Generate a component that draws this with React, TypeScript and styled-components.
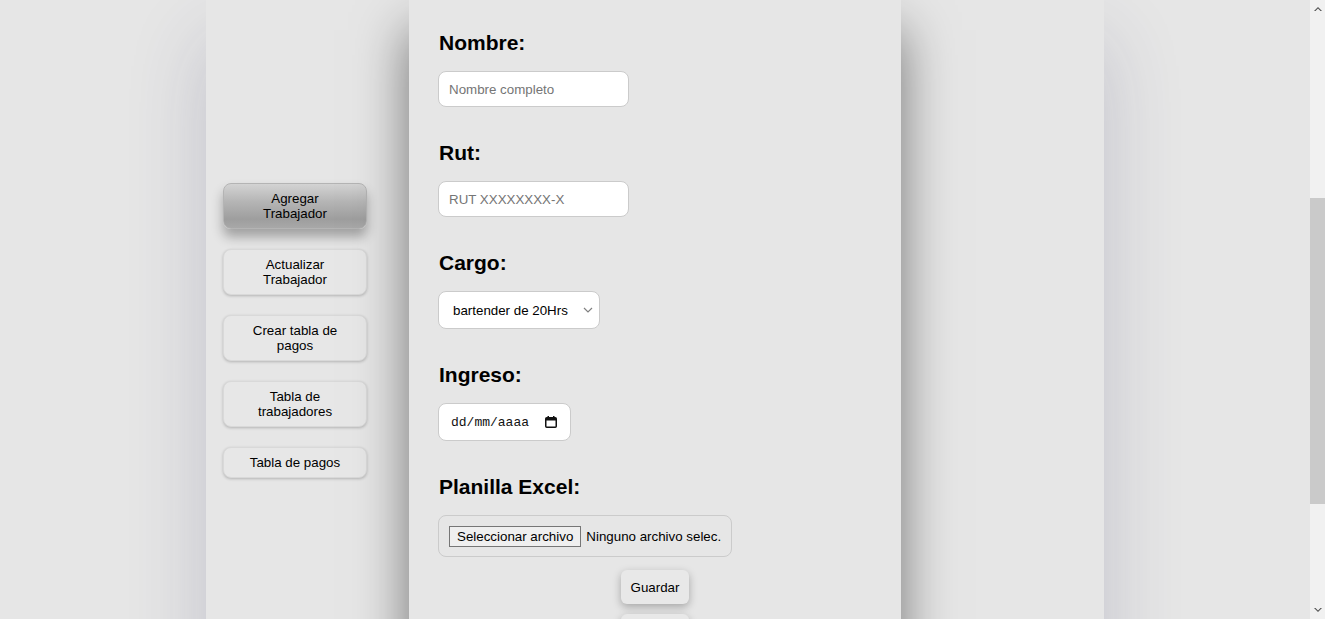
import React from 'react';
import styled, { createGlobalStyle } from 'styled-components';

const GlobalStyle = createGlobalStyle`
  html, body {
    margin: 0;
    padding: 0;
    height: 100%;
    overflow: hidden;
    background: #e6e6e6;
  }
  body {
    font-family: "Liberation Sans", Arial, sans-serif;
    color: #000;
  }
  #root { height: 100%; }
  * { box-sizing: border-box; }
`;

const Viewport = styled.div`
  display: flex;
  width: 100vw;
  height: 100vh;
  overflow: hidden;
`;

const Page = styled.div`
  flex: 1;
  min-width: 0;
  height: 100%;
  overflow: hidden;
  display: flex;
  justify-content: center;
  background: #e6e6e6;
`;

const Layout = styled.div`
  display: grid;
  grid-template-columns: 203px 492px 203px;
  width: 898px;
  height: 100%;
`;

const SideColumn = styled.aside`
  position: relative;
  z-index: 1;
  background: #e6e6e6;
  box-shadow: 0 40px 80px rgba(50, 50, 93, 0.2);
`;

const Sidebar = styled(SideColumn)`
  display: flex;
  flex-direction: column;
  align-items: flex-start;
  gap: 20px;
  padding: 183px 0 0 17px;
`;

const NavButton = styled.button<{ $active?: boolean }>`
  width: 144px;
  padding: 7px 20px;
  font-family: "Liberation Sans", Arial, sans-serif;
  font-size: 13.333px;
  line-height: 15px;
  color: #000;
  text-align: center;
  border-radius: 8px;
  border: 1px solid ${(p) => (p.$active ? '#b4b4b4' : '#d9d9d9')};
  background: ${(p) =>
    p.$active
      ? 'linear-gradient(180deg, #d3d3d3 0%, #b5b5b5 40%, #9e9e9e 80%, #a8a8a8 100%)'
      : '#e7e7e7'};
  box-shadow: ${(p) =>
    p.$active ? '0 8px 12px rgba(0, 0, 0, 0.3)' : '0 1px 3px rgba(0, 0, 0, 0.22)'};
  cursor: pointer;
`;

const FormPanel = styled.main`
  position: relative;
  z-index: 2;
  background: #e6e6e6;
  box-shadow: 0 30px 50px rgba(0, 0, 0, 0.5);
  padding: 30px 29px;
  display: flex;
  flex-direction: column;
  align-items: flex-start;
`;

const Field = styled.div<{ $last?: boolean }>`
  display: flex;
  flex-direction: column;
  align-items: flex-start;
  margin-bottom: ${(p) => (p.$last ? '13px' : '33px')};
`;

const Label = styled.label`
  font-size: 21px;
  font-weight: bold;
  line-height: 24px;
  margin: 1px 0 16px 1px;
`;

const TextInput = styled.input`
  width: 191px;
  height: 36px;
  padding: 0 10px;
  border: 1px solid #cbcbcb;
  border-radius: 8px;
  background: #fff;
  font-family: "Liberation Sans", Arial, sans-serif;
  font-size: 13.333px;
  color: #000;
  outline: none;
  &::placeholder { color: #757575; }
`;

const chevron =
  "url(\"data:image/svg+xml;utf8,<svg xmlns='http://www.w3.org/2000/svg' width='10' height='6' viewBox='0 0 10 6'><path d='M1 1l4 4 4-4' fill='none' stroke='%23808080' stroke-width='1.2'/></svg>\")";

const Select = styled.select`
  appearance: none;
  -webkit-appearance: none;
  width: 162px;
  height: 38px;
  padding: 0 24px 0 14px;
  border: 1px solid #cbcbcb;
  border-radius: 8px;
  background: #fff ${chevron} no-repeat right 6px center;
  font-family: "Liberation Sans", Arial, sans-serif;
  font-size: 13.333px;
  color: #000;
  outline: none;
`;

const DateBox = styled.div`
  width: 133px;
  height: 38px;
  padding: 0 13px 0 12px;
  border: 1px solid #cbcbcb;
  border-radius: 8px;
  background: #fff;
  display: flex;
  align-items: center;
  justify-content: space-between;
`;

const DateText = styled.span`
  font-family: "Liberation Mono", "DejaVu Sans Mono", monospace;
  font-size: 13px;
  color: #111;
`;

const FileBox = styled.div`
  width: 294px;
  height: 42px;
  padding: 0 10px;
  border: 1px solid #cbcbcb;
  border-radius: 8px;
  display: flex;
  align-items: center;
  gap: 5px;
  white-space: nowrap;
`;

const FileButton = styled.button`
  flex: none;
  padding: 2px 7px;
  border: 1px solid #767676;
  border-radius: 0;
  background: #efefef;
  font-family: "Liberation Sans", Arial, sans-serif;
  font-size: 13.333px;
  color: #000;
  line-height: normal;
  white-space: nowrap;
`;

const FileName = styled.span`
  font-size: 13.333px;
  color: #000;
  white-space: nowrap;
`;

const ActionButton = styled.button<{ $gap?: number }>`
  align-self: center;
  min-width: 68px;
  height: 34px;
  padding: 0 10px;
  margin-top: ${(p) => p.$gap ?? 0}px;
  border: none;
  border-radius: 6px;
  background: #e8e8e8;
  box-shadow: 0 3px 8px rgba(0, 0, 0, 0.28);
  font-family: "Liberation Sans", Arial, sans-serif;
  font-size: 13.333px;
  color: #000;
  flex: none;
`;

const Scrollbar = styled.div`
  width: 15px;
  flex: none;
  height: 100%;
  background: #f1f1f1;
  display: flex;
  flex-direction: column;
`;

const ScrollArrow = styled.div`
  height: 17px;
  flex: none;
  display: flex;
  align-items: center;
  justify-content: center;
`;

const ScrollGap = styled.div<{ $h?: number }>`
  flex: ${(p) => (p.$h ? 'none' : '1')};
  height: ${(p) => (p.$h ? `${p.$h}px` : 'auto')};
`;

const Thumb = styled.div`
  height: 306px;
  flex: none;
  background: #cacaca;
`;

const CalendarIcon = () => (
  <svg width="12" height="12" viewBox="0 0 12 12" aria-hidden="true">
    <rect x="2.5" y="0" width="1.5" height="2" fill="#111" />
    <rect x="8" y="0" width="1.5" height="2" fill="#111" />
    <rect x="0.75" y="1.75" width="10.5" height="9.5" rx="1" fill="none" stroke="#111" strokeWidth="1.5" />
    <rect x="1" y="2" width="10" height="2.5" fill="#111" />
  </svg>
);

const ArrowUp = () => (
  <svg width="8" height="5" viewBox="0 0 8 5" aria-hidden="true">
    <polygon points="0,5 4,1 8,5 6.5,5 4,2.6 1.5,5" fill="#505050" />
  </svg>
);

const ArrowDown = () => (
  <svg width="8" height="5" viewBox="0 0 8 5" aria-hidden="true">
    <polygon points="0,0 4,4 8,0 6.5,0 4,2.4 1.5,0" fill="#505050" />
  </svg>
);

const navItems = [
  'Agregar Trabajador',
  'Actualizar Trabajador',
  'Crear tabla de pagos',
  'Tabla de trabajadores',
  'Tabla de pagos',
];

export default function App() {
  return (
    <>
      <GlobalStyle />
      <Viewport>
        <Page>
          <Layout>
            <Sidebar>
              {navItems.map((item, i) => (
                <NavButton key={item} $active={i === 0}>
                  {item}
                </NavButton>
              ))}
            </Sidebar>
            <FormPanel>
              <Field>
                <Label htmlFor="nombre">Nombre:</Label>
                <TextInput id="nombre" type="text" placeholder="Nombre completo" />
              </Field>
              <Field>
                <Label htmlFor="rut">Rut:</Label>
                <TextInput id="rut" type="text" placeholder="RUT XXXXXXXX-X" />
              </Field>
              <Field>
                <Label htmlFor="cargo">Cargo:</Label>
                <Select id="cargo" defaultValue="bartender20">
                  <option value="bartender20">bartender de 20Hrs</option>
                  <option value="bartender40">bartender de 40Hrs</option>
                  <option value="garzon">garzón</option>
                </Select>
              </Field>
              <Field>
                <Label>Ingreso:</Label>
                <DateBox>
                  <DateText>dd/mm/aaaa</DateText>
                  <CalendarIcon />
                </DateBox>
              </Field>
              <Field $last>
                <Label>Planilla Excel:</Label>
                <FileBox>
                  <FileButton type="button">Seleccionar archivo</FileButton>
                  <FileName>Ninguno archivo selec.</FileName>
                </FileBox>
              </Field>
              <ActionButton type="button">Guardar</ActionButton>
              <ActionButton type="button" $gap={10} aria-label="Volver" />
            </FormPanel>
            <SideColumn />
          </Layout>
        </Page>
        <Scrollbar>
          <ScrollArrow>
            <ArrowUp />
          </ScrollArrow>
          <ScrollGap $h={181} />
          <Thumb />
          <ScrollGap />
          <ScrollArrow>
            <ArrowDown />
          </ScrollArrow>
        </Scrollbar>
      </Viewport>
    </>
  );
}
